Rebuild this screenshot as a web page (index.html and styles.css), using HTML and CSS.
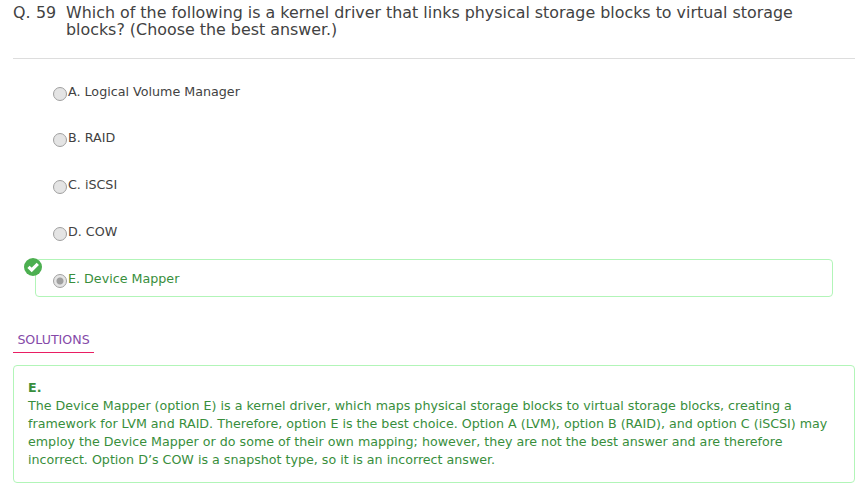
FILE: index.html
```html
<!DOCTYPE html>
<html lang="en">
<head>
<meta charset="utf-8">
<title>Question 59</title>
<link rel="stylesheet" href="styles.css">
</head>
<body>
<main class="quiz">
  <header class="question">
    <span class="number">Q. 59</span>
    <h1>Which of the following is a kernel driver that links physical storage blocks to virtual storage blocks? (Choose the best answer.)</h1>
  </header>
  <div class="options">
    <label class="option"><span class="radio"></span><span>A. Logical Volume Manager</span></label>
    <label class="option"><span class="radio"></span><span>B. RAID</span></label>
    <label class="option"><span class="radio"></span><span>C. iSCSI</span></label>
    <label class="option"><span class="radio"></span><span>D. COW</span></label>
    <label class="option correct">
      <svg class="check" viewBox="0 0 18 18"><circle cx="9" cy="9" r="9"/><path d="M4.5 8.8 7.7 11.9 13.8 5.9"/></svg>
      <span class="radio checked"></span><span>E. Device Mapper</span>
    </label>
  </div>
  <div class="tab">SOLUTIONS</div>
  <section class="solution">
    <strong>E.</strong>
    <p>The Device Mapper (option E) is a kernel driver, which maps physical storage blocks to virtual storage blocks, creating a framework for LVM and RAID. Therefore, option E is the best choice. Option A (LVM), option B (RAID), and option C (iSCSI) may employ the Device Mapper or do some of their own mapping; however, they are not the best answer and are therefore incorrect. Option D’s COW is a snapshot type, so it is an incorrect answer.</p>
  </section>
</main>
</body>
</html>
```
FILE: styles.css
```css
* { box-sizing: border-box; }
body {
  margin: 0;
  background: #fff;
  color: #424242;
  font-family: "DejaVu Sans", sans-serif;
  font-size: 12.67px;
}
.quiz { padding: 4px 11px 0 13px; }
.question {
  display: flex;
  height: 55px;
  border-bottom: 1px solid #ddd;
  font-size: 15.88px;
  line-height: 17px;
}
.number { flex: 0 0 53px; white-space: nowrap; letter-spacing: 0.1px; }
h1 { margin: 0; font: inherit; }
.options { padding: 14px 22px 0; }
.option {
  position: relative;
  display: flex;
  height: 37px;
  margin-bottom: 10px;
  padding: 0 17px;
  border: 1px solid transparent;
  border-radius: 4px;
  line-height: 35px;
  font-size: 12.7px;
}
.option:first-child { height: 36px; }
.radio {
  width: 14px;
  height: 14px;
  margin: 13px 1px 0 0;
  border: 1px solid #a0a0a0;
  border-radius: 50%;
  background: #e4e4e4;
}
.checked { background: radial-gradient(circle, #a0a0a0 0 3px, #e4e4e4 4px); }
.correct {
  height: 38px;
  margin-top: -1px;
  padding-top: 1px;
  border-color: #b2f5b8;
  color: #388e3c;
}
.check { position: absolute; left: -12px; top: -2px; width: 18px; height: 18px; }
.check circle { fill: #4caf50; }
.check path { fill: none; stroke: #fff; stroke-width: 3.2; }
.tab {
  width: 81px;
  height: 24px;
  margin-top: 32px;
  border-bottom: 1px solid #e91e63;
  color: #8549a8;
  font-size: 12.6px;
  line-height: 21px;
  text-align: center;
}
.solution {
  height: 118px;
  margin-top: 12px;
  padding: 13px 14px;
  border: 1px solid #b2f5b8;
  border-radius: 4px;
  color: #388e3c;
  line-height: 18px;
}
.solution strong { display: block; }
.solution p { margin: 0; }
```
